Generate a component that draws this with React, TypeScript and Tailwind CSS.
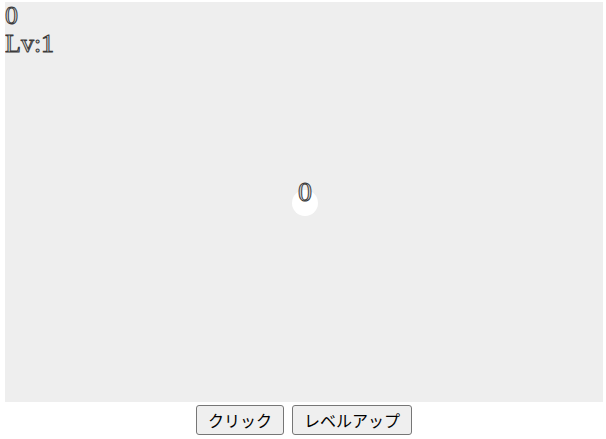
import React, { useState } from 'react';

const outline: React.CSSProperties = { WebkitTextStroke: '1px #3a3a3a' };

const App: React.FC = () => {
  const [count, setCount] = useState(0);
  const [level, setLevel] = useState(1);

  return (
    <div className="w-[606px] h-[439px] bg-white flex flex-col">
      {/* game field */}
      <div className="relative ml-[5px] mt-[2px] w-[598px] h-[400px] bg-[#eeeeee] overflow-hidden">
        <div
          className="font-['Liberation_Serif',serif] text-[26px] leading-[28px] text-[#d8d8d8]"
          style={outline}
        >
          <div>{count}</div>
          <div>Lv:{level}</div>
        </div>
        {/* ball with its counter drawn on top */}
        <div className="absolute left-[287px] top-[188px] w-[26px] h-[26px] rounded-full bg-white" />
        <div
          className="absolute left-[280px] top-[175px] w-[40px] text-center font-['Liberation_Serif',serif] text-[28px] leading-[30px] text-[#d8d8d8]"
          style={outline}
        >
          {count}
        </div>
      </div>
      <div className="flex justify-center gap-[8px] mt-[3px] pl-[2px] font-['Noto_Sans_CJK_JP',sans-serif] text-[16px] text-black">
        <button
          onClick={() => setCount(count + level)}
          className="h-[30px] px-[11px] bg-[#efefef] border border-[#767676] rounded-[3px] leading-none"
        >
          クリック
        </button>
        <button
          onClick={() => setLevel(level + 1)}
          className="h-[30px] px-[11px] bg-[#efefef] border border-[#767676] rounded-[3px] leading-none"
        >
          レベルアップ
        </button>
      </div>
    </div>
  );
};

export default App;
